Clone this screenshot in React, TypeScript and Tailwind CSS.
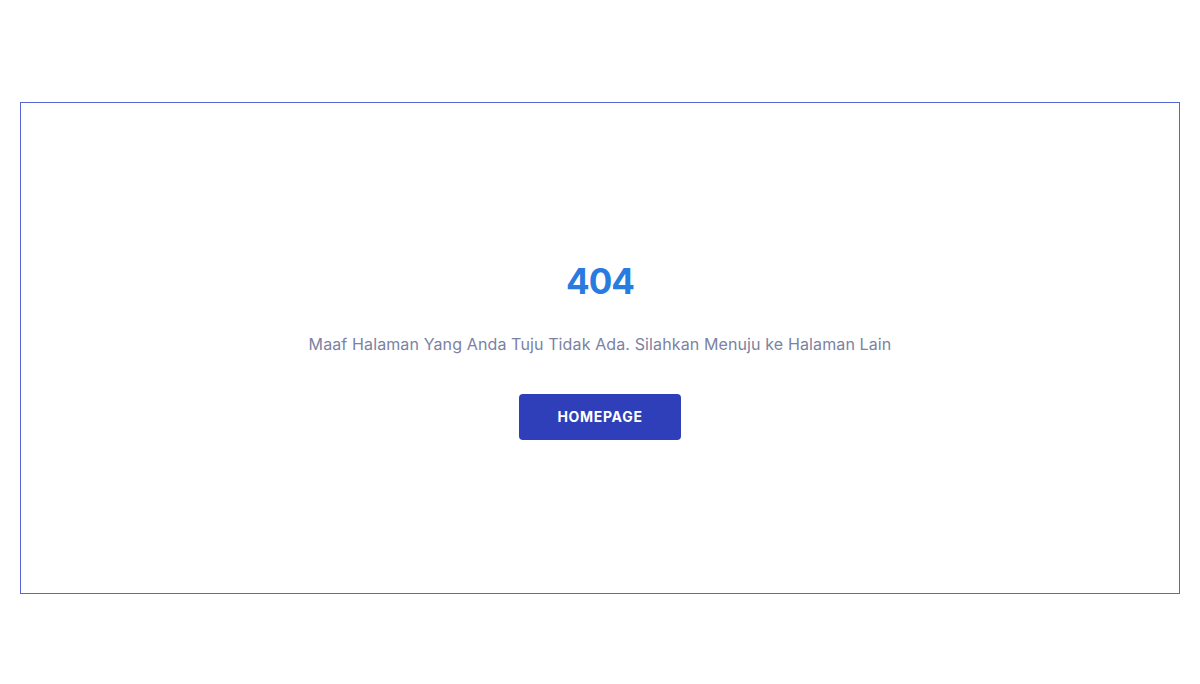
import React from 'react';

export default function App() {
  return (
    <div className="min-h-[684px] bg-white px-5 pt-[102px] font-['Inter',sans-serif]">
      <div className="flex h-[492px] flex-col items-center border border-[#5867d8] pt-[158px]">
        <h1 className="text-[35px] font-bold leading-10 tracking-[-1px] text-[#2a7be0]">404</h1>
        <p className="mt-[31px] text-base leading-6 tracking-[0.12px] text-[#7b82a3]">
          Maaf Halaman Yang Anda Tuju Tidak Ada. Silahkan Menuju ke Halaman Lain
        </p>
        <button className="mt-[38px] h-[46px] w-[162px] rounded bg-[#2f3fb9] text-sm font-bold tracking-[0.05em] text-white">
          HOMEPAGE
        </button>
      </div>
    </div>
  );
}
